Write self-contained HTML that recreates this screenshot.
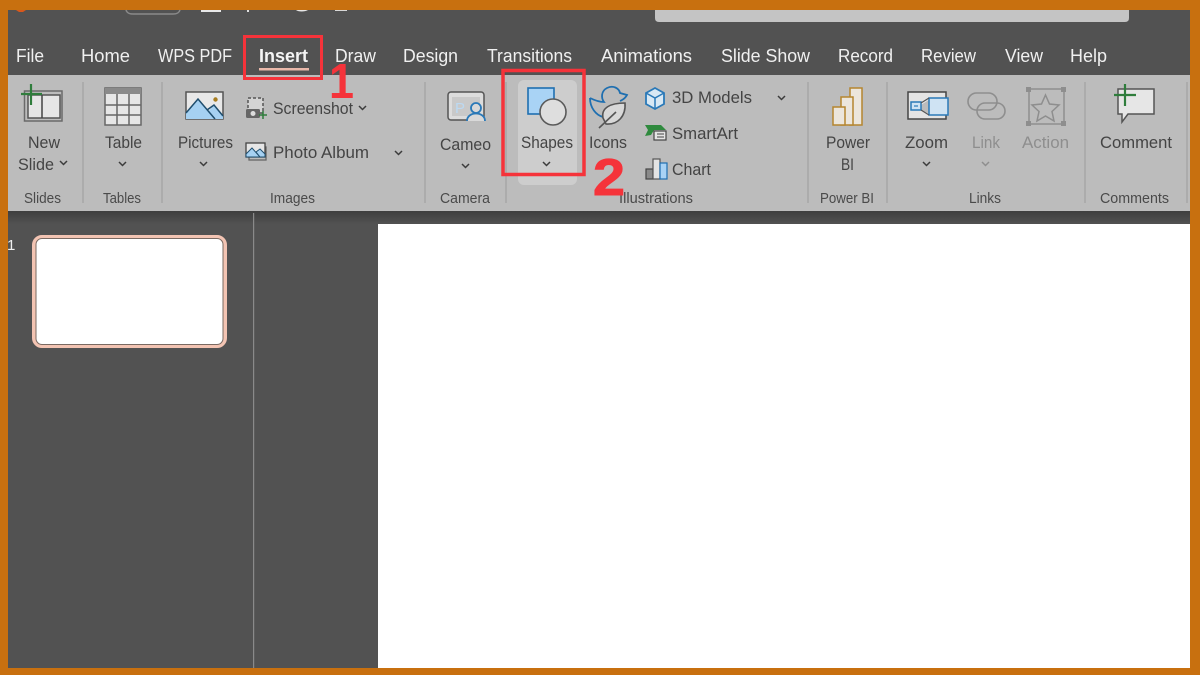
<!DOCTYPE html>
<html><head><meta charset="utf-8"><style>
html,body{margin:0;padding:0;width:1200px;height:675px;overflow:hidden;background:#c8700f}
svg{display:block;filter:blur(0.3px)}
text{font-family:"Liberation Sans",sans-serif}
.t{font-size:18px;fill:#f0f0f0}
.l{font-size:16.5px;fill:#444444}
.d{font-size:16.5px;fill:#8e8e8e}
.g{font-size:14.5px;fill:#4a4a4a}
.c{fill:none;stroke:#3c3c3c;stroke-width:1.5}
.sep{stroke:#a4a4a4;stroke-width:1.3}
</style></head><body>
<svg width="1200" height="675" viewBox="0 0 1200 675" xmlns="http://www.w3.org/2000/svg">
<defs><linearGradient id="sh" x1="0" y1="0" x2="0" y2="1"><stop offset="0" stop-color="#3e3e3e"/><stop offset="1" stop-color="#525252"/></linearGradient></defs>
<rect width="1200" height="675" fill="#c8700f"/>
<rect x="8" y="10" width="1182" height="658" fill="#525252"/>
<!-- title bar fragments -->
<path d="M16 10h10l-3 2h-4z" fill="#d8581c"/>
<path d="M126 10c1 3 3 4 7 4h40c4 0 6-1 7-4" fill="none" stroke="#8a8a8a" stroke-width="1.5"/>
<rect x="201" y="10" width="20" height="2" fill="#e8e8e8"/>
<rect x="247" y="10" width="2" height="2" fill="#e0e0e0"/>
<path d="M296 10c2 2 9 2 12 0z" fill="#e8e8e8"/>
<rect x="335" y="10" width="12" height="1" fill="#d8d8d8"/>
<path d="M655 10h474v8q0 4-4 4H659q-4 0-4-4z" fill="#c4c4c4"/>
<!-- tabs -->
<text class="t" x="16" y="62" textLength="28" lengthAdjust="spacingAndGlyphs">File</text>
<text class="t" x="81" y="62" textLength="49" lengthAdjust="spacingAndGlyphs">Home</text>
<text class="t" x="158" y="62" textLength="74" lengthAdjust="spacingAndGlyphs">WPS PDF</text>
<text class="t" x="259" y="62" textLength="49" lengthAdjust="spacingAndGlyphs" font-weight="700" style="fill:#f4f4f4">Insert</text>
<rect x="259" y="68" width="50" height="2.5" fill="#eab9ab"/>
<text class="t" x="335" y="62" textLength="41" lengthAdjust="spacingAndGlyphs">Draw</text>
<text class="t" x="403" y="62" textLength="55" lengthAdjust="spacingAndGlyphs">Design</text>
<text class="t" x="487" y="62" textLength="85" lengthAdjust="spacingAndGlyphs">Transitions</text>
<text class="t" x="601" y="62" textLength="91" lengthAdjust="spacingAndGlyphs">Animations</text>
<text class="t" x="721" y="62" textLength="89" lengthAdjust="spacingAndGlyphs">Slide Show</text>
<text class="t" x="838" y="62" textLength="55" lengthAdjust="spacingAndGlyphs">Record</text>
<text class="t" x="921" y="62" textLength="55" lengthAdjust="spacingAndGlyphs">Review</text>
<text class="t" x="1005" y="62" textLength="38" lengthAdjust="spacingAndGlyphs">View</text>
<text class="t" x="1070" y="62" textLength="37" lengthAdjust="spacingAndGlyphs">Help</text>
<!-- ribbon -->
<rect x="8" y="75" width="1182" height="136" fill="#bcbcbc"/>
<rect x="8" y="211" width="1182" height="13" fill="url(#sh)"/>
<g class="sep"><path d="M83 82V203M162 82V203M425 82V203M506 82V203M808 82V203M887 82V203M1085 82V203M1187 82V203"/></g>
<!-- shapes hover -->
<rect x="518" y="80" width="59" height="105" rx="6" fill="#cdcdcd"/>
<!-- New Slide icon -->
<rect x="24.500" y="91" width="37.500" height="30" fill="none" stroke="#6a6a6a" stroke-width="1.500"/>
<rect x="28" y="95" width="32" height="23" fill="#e6e6e6" stroke="#555" stroke-width="1.500"/>
<path d="M42 95V118" stroke="#444" stroke-width="1.500" fill="none"/>
<path d="M31 84V105M21 94H42" stroke="#2f7d3c" stroke-width="2.200"/>
<!-- Table icon -->
<rect x="105" y="88" width="36" height="37" fill="#e6e6e6" stroke="#666" stroke-width="1.500"/>
<rect x="105" y="88" width="36" height="6" fill="#8a8a8a"/>
<path d="M117 94V125M129 94V125M105 105H141M105 115H141" stroke="#666" stroke-width="1.500" fill="none"/>
<!-- Pictures icon -->
<rect x="186" y="92" width="37" height="27" fill="#e8e8e8" stroke="#555" stroke-width="1.500"/>
<path d="M186 113L198 99L214 119H186ZM208 112L214 105L223 116V119H214Z" fill="#a6d1f2"/>
<path d="M186 113L198 99L215 119M207 110L214 105L223 116" fill="none" stroke="#1f4e6e" stroke-width="1.500"/>
<circle cx="215.500" cy="99.500" r="2.200" fill="#a77c1e"/>
<!-- Screenshot icon -->
<rect x="248" y="98" width="15" height="15" fill="#d4d4d4" stroke="#555" stroke-width="1.500" stroke-dasharray="3 2"/>
<rect x="246" y="109" width="14" height="9" rx="1.500" fill="#666"/>
<circle cx="253" cy="113.500" r="2.500" fill="#ddd"/>
<path d="M263 111v8M259 115h8" stroke="#2f7d3c" stroke-width="1.500"/>
<!-- Photo album icon -->
<rect x="249" y="147" width="17" height="13" fill="none" stroke="#666" stroke-width="1.300"/>
<rect x="246" y="143" width="19" height="14" fill="#e6e6e6" stroke="#444" stroke-width="1.300"/>
<path d="M246 154l6-6 8 9h-14zM256 152l4-3 5 5v3h-5z" fill="#a6d1f2" stroke="#1f4e6e" stroke-width="1"/>
<!-- Cameo icon -->
<rect x="448" y="92" width="36" height="28" rx="3" fill="#dcdcdc" stroke="#555" stroke-width="1.500"/>
<rect x="452" y="97" width="28" height="19" fill="#c9c9c9"/>
<text x="455" y="113" font-size="15" fill="#bcd9f2">P</text>
<circle cx="476" cy="108" r="5" fill="#d9d9d9" stroke="#2a79b8" stroke-width="1.800"/>
<path d="M467 121c0-10 18-10 18 0" fill="#d9d9d9" stroke="#2a79b8" stroke-width="1.800"/>
<!-- Shapes icon -->
<rect x="528" y="88" width="26" height="26" fill="#a9d3f5" stroke="#1f6fb0" stroke-width="1.600"/>
<circle cx="553" cy="112" r="13" fill="#dedede" stroke="#5a5a5a" stroke-width="1.600"/>
<!-- Icons icon -->
<path d="M590 98C596 101 600 102 604 102C601 98 601 91 607 88C613 85 619 88 620 93L627 95C625 99 622 100 620 101M590 98C590 108 596 115 603 117" fill="none" stroke="#1f6fb0" stroke-width="1.800"/>
<path d="M603 118C601 108 610 103 625 103C626 116 618 125 606 124Z" fill="#d8d8d8" stroke="#555" stroke-width="1.600"/>
<path d="M599 128L616 112" stroke="#555" stroke-width="1.600"/>
<!-- 3D -->
<path d="M655 88l9 5v11l-9 5-9-5V93z" fill="#d8e8f4" stroke="#2a79b8" stroke-width="1.800"/>
<path d="M646 93l9 5 9-5M655 98v10" fill="none" stroke="#2a79b8" stroke-width="1.500"/>
<!-- SmartArt -->
<path d="M645 125h16l5 5h-12l-3 5-6 1 3-6z" fill="#2f8a3e"/>
<rect x="654" y="131" width="12" height="9" fill="#e4e4e4" stroke="#444" stroke-width="1.200"/>
<path d="M657 134h7M657 137h7" stroke="#444" stroke-width="1"/>
<!-- Chart -->
<rect x="646" y="169" width="7" height="10" fill="#8a8a8a" stroke="#444" stroke-width="1.200"/>
<rect x="653" y="159" width="7" height="20" fill="#e4e4e4" stroke="#555" stroke-width="1.200"/>
<rect x="660" y="163" width="7" height="16" fill="#a9d3f5" stroke="#1f6fb0" stroke-width="1.200"/>
<!-- Power BI -->
<rect x="850" y="88" width="12" height="37" fill="#ece6dc" stroke="#b5852f" stroke-width="1.500"/>
<rect x="841" y="97" width="12" height="28" fill="#ece6dc" stroke="#b5852f" stroke-width="1.500"/>
<rect x="833" y="107" width="12" height="18" fill="#ece6dc" stroke="#b5852f" stroke-width="1.500"/>
<!-- Zoom -->
<rect x="908" y="92" width="38" height="27" fill="#e4e4e4" stroke="#444" stroke-width="1.500"/>
<path d="M921 105l11-7h16v17h-16l-11-5z" fill="#bcbcbc"/>
<rect x="929" y="98" width="19" height="17" fill="#cfe3f3" stroke="#2a79b8" stroke-width="1.500"/>
<rect x="911" y="102" width="10" height="8" fill="#cfe3f3" stroke="#2a79b8" stroke-width="1.500"/>
<path d="M914 106h4" stroke="#2a79b8" stroke-width="1.200"/>
<path d="M921 103l8-5M921 110l8 5" stroke="#555" stroke-width="1.200"/>
<!-- Link -->
<g fill="none" stroke="#8e8e8e" stroke-width="1.600"><rect x="968" y="93" width="29" height="17" rx="8.500"/><rect x="977" y="103" width="28" height="16" rx="8"/></g>
<!-- Action -->
<rect x="1029" y="89" width="35" height="35" fill="none" stroke="#8e8e8e" stroke-width="1.500"/>
<g fill="#8e8e8e"><rect x="1026" y="87" width="5" height="5"/><rect x="1061" y="87" width="5" height="5"/><rect x="1026" y="121" width="5" height="5"/><rect x="1061" y="121" width="5" height="5"/></g>
<path d="M1045.500 95l4 9 9.500 1-7 6.500 2 9.500-8.500-5-8.500 5 2-9.500-7-6.500 9.500-1z" fill="none" stroke="#8e8e8e" stroke-width="1.500"/>
<!-- Comment -->
<path d="M1118 89h36v25h-26l-6 8v-8h-4z" fill="#e6e6e6" stroke="#555" stroke-width="1.500"/>
<path d="M1125 84V106M1114 95H1136" stroke="#2f7d3c" stroke-width="2.200"/>
<!-- labels -->
<text class="l" x="28" y="148" textLength="32" lengthAdjust="spacingAndGlyphs">New</text>
<text class="l" x="18" y="170" textLength="36" lengthAdjust="spacingAndGlyphs">Slide</text>
<text class="l" x="105" y="148" textLength="37" lengthAdjust="spacingAndGlyphs">Table</text>
<text class="l" x="178" y="148" textLength="55" lengthAdjust="spacingAndGlyphs">Pictures</text>
<text class="l" x="273" y="114" textLength="80" lengthAdjust="spacingAndGlyphs">Screenshot</text>
<text class="l" x="273" y="158" textLength="96" lengthAdjust="spacingAndGlyphs">Photo Album</text>
<text class="l" x="440" y="150" textLength="51" lengthAdjust="spacingAndGlyphs">Cameo</text>
<text class="l" x="521" y="148" textLength="52" lengthAdjust="spacingAndGlyphs">Shapes</text>
<text class="l" x="589" y="148" textLength="38" lengthAdjust="spacingAndGlyphs">Icons</text>
<text class="l" x="672" y="103" textLength="80" lengthAdjust="spacingAndGlyphs">3D Models</text>
<text class="l" x="672" y="139" textLength="66" lengthAdjust="spacingAndGlyphs">SmartArt</text>
<text class="l" x="672" y="175" textLength="39" lengthAdjust="spacingAndGlyphs">Chart</text>
<text class="l" x="826" y="148" textLength="44" lengthAdjust="spacingAndGlyphs">Power</text>
<text class="l" x="841" y="170" textLength="13" lengthAdjust="spacingAndGlyphs">BI</text>
<text class="l" x="905" y="148" textLength="43" lengthAdjust="spacingAndGlyphs">Zoom</text>
<text class="d" x="972" y="148" textLength="28" lengthAdjust="spacingAndGlyphs">Link</text>
<text class="d" x="1022" y="148" textLength="47" lengthAdjust="spacingAndGlyphs">Action</text>
<text class="l" x="1100" y="148" textLength="72" lengthAdjust="spacingAndGlyphs">Comment</text>
<!-- chevrons -->
<g class="c">
<path d="M60 161l3.500 3.500 3.500-3.500M119 162l3.500 3.500 3.500-3.500M200 162l3.500 3.500 3.500-3.500M359 106l3.500 3.500 3.500-3.500M395 151l3.500 3.500 3.500-3.500M462 164l3.500 3.500 3.500-3.500M543 162l3.500 3.500 3.500-3.500M778 96l3.500 3.500 3.500-3.500M923 162l3.500 3.500 3.500-3.500"/>
</g>
<path d="M982 162l3.500 3.500 3.500-3.500" fill="none" stroke="#8e8e8e" stroke-width="1.500"/>
<!-- group labels -->
<text class="g" x="24" y="203" textLength="37" lengthAdjust="spacingAndGlyphs">Slides</text>
<text class="g" x="103" y="203" textLength="38" lengthAdjust="spacingAndGlyphs">Tables</text>
<text class="g" x="270" y="203" textLength="45" lengthAdjust="spacingAndGlyphs">Images</text>
<text class="g" x="440" y="203" textLength="50" lengthAdjust="spacingAndGlyphs">Camera</text>
<text class="g" x="619" y="203" textLength="74" lengthAdjust="spacingAndGlyphs">Illustrations</text>
<text class="g" x="820" y="203" textLength="54" lengthAdjust="spacingAndGlyphs">Power BI</text>
<text class="g" x="969" y="203" textLength="32" lengthAdjust="spacingAndGlyphs">Links</text>
<text class="g" x="1100" y="203" textLength="69" lengthAdjust="spacingAndGlyphs">Comments</text>
<!-- workspace -->
<rect x="253" y="213" width="1.200" height="455" fill="#8a8a8a"/>
<rect x="378" y="224" width="812" height="444" fill="#ffffff"/>
<text x="7" y="250" font-size="15" fill="#f0f0f0">1</text>
<rect x="34" y="237" width="191" height="109" rx="8" fill="#fff" stroke="#f3c4b3" stroke-width="4"/>
<rect x="36" y="238.500" width="187" height="106" rx="6" fill="#fff" stroke="#7a6a62" stroke-width="1"/>
<!-- annotations -->
<rect x="244.500" y="36.500" width="77" height="42" fill="none" stroke="#f5333a" stroke-width="3"/>
<rect x="503" y="70.500" width="81" height="104" fill="none" stroke="#f5333a" stroke-width="3.500"/>
<text x="329" y="98" font-size="49" font-weight="700" fill="#f5333a" textLength="25" lengthAdjust="spacingAndGlyphs">1</text>
<text x="593" y="195" font-size="52" font-weight="700" fill="#f5333a" stroke="#f5333a" stroke-width="1" textLength="32" lengthAdjust="spacingAndGlyphs">2</text>
</svg>
</body></html>
